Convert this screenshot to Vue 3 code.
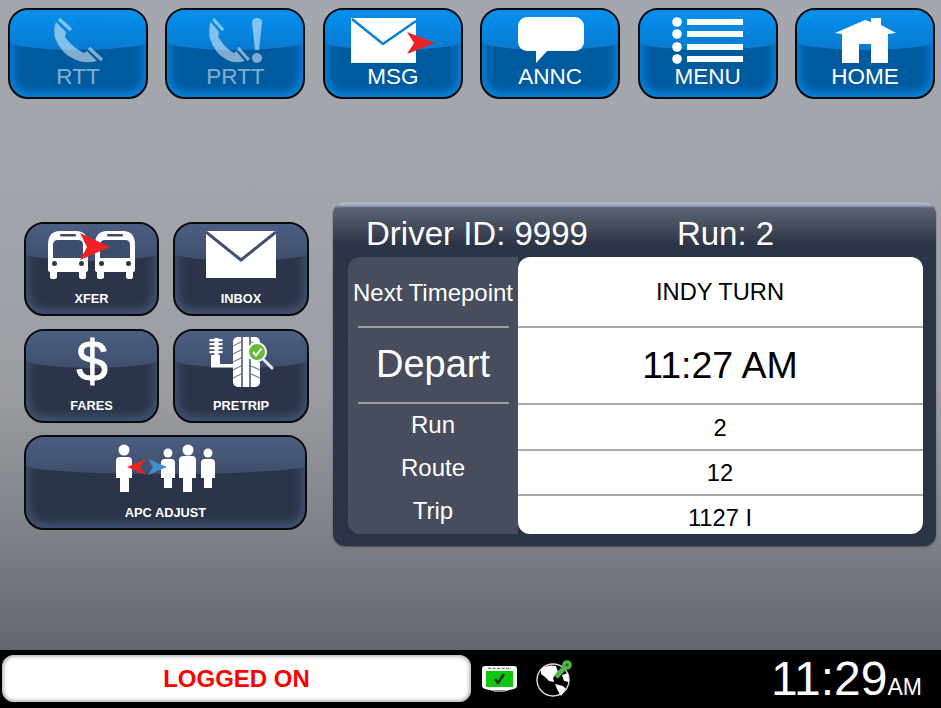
<script setup>
const topLabelClass = (off) => (off ? 'lbl off' : 'lbl')
</script>

<template>
  <div class="screen">
    <div class="main">
      <div class="top-row">
        <button class="btn blue">
          <svg class="ico off" viewBox="10 10 135 56" width="135" height="56">
            <path fill="#fff" d="M55 22 L65 32 L64 37 Q72 48 83 53 L86 51 L96 61 Q85 64 75 60 Q60 54 54 38 Q52 30 55 22 Z" />
            <path d="M58 19 L70 30 M88 48 L101 60" stroke="#fff" stroke-width="3.400" />
          </svg>
          <span :class="topLabelClass(true)">RTT</span>
        </button>
        <button class="btn blue">
          <svg class="ico off" viewBox="167 10 136 56" width="136" height="56">
            <g transform="translate(165 0) scale(.83 1)">
              <path fill="#fff" d="M55 22 L65 32 L64 37 Q72 48 83 53 L86 51 L96 61 Q85 64 75 60 Q60 54 54 38 Q52 30 55 22 Z" />
              <path d="M58 19 L70 30 M88 48 L101 60" stroke="#fff" stroke-width="3.400" />
            </g>
            <path fill="#fff" d="M252 23 Q252 18 257 18 Q262 18 262 23 L259 50 L255 50 Z" />
            <circle cx="257" cy="58" r="5" fill="#fff" />
          </svg>
          <span :class="topLabelClass(true)">PRTT</span>
        </button>
        <button class="btn blue">
          <svg class="ico" viewBox="324 10 136 56" width="136" height="56">
            <rect x="350" y="18" width="65" height="45" fill="#fff" />
            <path d="M351 19 L382 44 L415 21" fill="none" stroke="#0a7fd6" stroke-width="2.600" />
            <path d="M406 32 L434 43 L406 54 L413 43 Z" fill="#ee2224" />
          </svg>
          <span class="lbl">MSG</span>
        </button>
        <button class="btn blue">
          <svg class="ico" viewBox="483 10 135 56" width="135" height="56">
            <rect x="518" y="17" width="66" height="34" rx="9" fill="#fff" />
            <path d="M536 49 L536 63 L549 49 Z" fill="#fff" />
          </svg>
          <span class="lbl">ANNC</span>
        </button>
        <button class="btn blue">
          <svg class="ico" viewBox="640 10 136 56" width="136" height="56">
            <g fill="#fff">
              <circle cx="677" cy="22" r="4.800" />
              <circle cx="677" cy="34" r="4.800" />
              <circle cx="677" cy="47" r="4.800" />
              <circle cx="677" cy="59" r="4.800" />
              <rect x="687" y="19" width="56" height="6" />
              <rect x="687" y="31" width="56" height="6" />
              <rect x="687" y="44" width="56" height="6" />
              <rect x="687" y="56" width="56" height="6" />
            </g>
          </svg>
          <span class="lbl">MENU</span>
        </button>
        <button class="btn blue">
          <svg class="ico" viewBox="798 10 135 56" width="135" height="56">
            <path fill="#fff" d="M836 33 L866 20 L872 22 L872 18 L882 18 L882 25 L897 33 L889 34 L889 63 L872 63 L872 44 L860 44 L860 63 L843 63 L843 34 Z" />
          </svg>
          <span class="lbl">HOME</span>
        </button>
      </div>

      <div class="mid">
        <div class="side">
          <button class="btn dark">
            <svg class="ico" viewBox="26 224 131 56" width="131" height="56">
              <g>
                <path fill="#fff" d="M48 245 Q48 231 60 231 L76 231 Q88 231 88 245 L88 270 Q88 272 86 272 L86 277 Q86 279 83 279 Q79 279 79 277 L79 272 L57 272 L57 277 Q57 279 53 279 Q50 279 50 277 L50 272 Q48 272 48 270 Z" />
                <path fill="#3d4d6c" d="M53 258 L53 245 Q53 240 58 240 L78 240 Q83 240 83 245 L83 258 Z" />
                <rect x="60" y="234" width="16" height="2.400" rx="1" fill="#3d4d6c" />
                <circle cx="54.500" cy="263.500" r="2.500" fill="#2d374c" />
                <circle cx="81.500" cy="263.500" r="2.500" fill="#2d374c" />
              </g>
              <g transform="translate(47 0)">
                <path fill="#fff" d="M48 245 Q48 231 60 231 L76 231 Q88 231 88 245 L88 270 Q88 272 86 272 L86 277 Q86 279 83 279 Q79 279 79 277 L79 272 L57 272 L57 277 Q57 279 53 279 Q50 279 50 277 L50 272 Q48 272 48 270 Z" />
                <path fill="#3d4d6c" d="M53 258 L53 245 Q53 240 58 240 L78 240 Q83 240 83 245 L83 258 Z" />
                <rect x="60" y="234" width="16" height="2.400" rx="1" fill="#3d4d6c" />
                <circle cx="54.500" cy="263.500" r="2.500" fill="#2d374c" />
                <circle cx="81.500" cy="263.500" r="2.500" fill="#2d374c" />
              </g>
              <path d="M80 233 L110 247 L80 260 L87 247 Z" fill="#ee2224" />
            </svg>
            <span class="lbl small">XFER</span>
          </button>
          <button class="btn dark">
            <svg class="ico" viewBox="175 224 132 56" width="132" height="56">
              <rect x="206" y="231" width="70" height="47" fill="#fff" />
              <path d="M206 232 L241 260 L276 232" fill="none" stroke="#3f5070" stroke-width="3" />
            </svg>
            <span class="lbl small">INBOX</span>
          </button>
          <button class="btn dark">
            <svg class="ico visible" viewBox="26 331 131 56" width="131" height="56">
              <text x="92" y="381" text-anchor="middle" class="dollar">$</text>
            </svg>
            <span class="lbl small">FARES</span>
          </button>
          <button class="btn dark">
            <svg class="ico" viewBox="175 331 132 56" width="132" height="56">
              <g fill="#fff">
                <rect x="214.500" y="338" width="4" height="20" />
                <path d="M209.500 339 H222.500 V341.300 H209.500 Z M209.500 343 H222.500 V345.300 H209.500 Z M209.500 347 H222.500 V349.300 H209.500 Z M209.500 351 H222.500 V353.300 H209.500 Z" />
                <path d="M211 355 H220 V364 H233 V367.500 H211 Z" />
                <rect x="233" y="337" width="27" height="50" rx="5" />
              </g>
              <path d="M242 337 V387 M250 337 V387" stroke="#3c4a66" stroke-width="1.500" />
              <path d="M233 346 L241 342 M233 354 L241 350 M233 362 L241 358 M233 370 L241 366 M233 378 L241 374 M251 342 L260 346 M251 358 L260 362 M251 366 L260 370 M251 374 L260 378" stroke="#7d869a" stroke-width="1.300" />
              <path d="M264 360 L272 368" stroke="#e8e8e8" stroke-width="3" stroke-linecap="round" />
              <circle cx="257" cy="352" r="9" fill="#66bb3a" stroke="#fff" stroke-width="2" />
              <path d="M253 352 L256 355.500 L261.500 348.500" fill="none" stroke="#fff" stroke-width="2" />
            </svg>
            <span class="lbl small pretrip">PRE TRIP</span>
          </button>
          <button class="btn dark wide">
            <svg class="ico" viewBox="26 437 279 56" width="279" height="56">
              <g fill="#fff">
                <circle cx="124" cy="450" r="5.500" />
                <path d="M120 457 H128 Q132 457 132 461 V478 H129 V492 H120 V478 H116 V461 Q116 457 120 457 Z" />
                <circle cx="168" cy="453" r="4.500" />
                <path d="M165 459 H171 Q175 459 175 463 V478 H172 V488 H164 V478 H161 V463 Q161 459 165 459 Z" />
                <circle cx="188" cy="450" r="5.500" />
                <path d="M184 456 H192 Q196 456 196 460 V478 H192 V492 H183 V478 H179 V460 Q179 456 184 456 Z" />
                <circle cx="208" cy="453" r="4.500" />
                <path d="M205 459 H211 Q215 459 215 463 V478 H212 V488 H204 V478 H201 V463 Q201 459 205 459 Z" />
              </g>
              <path d="M146 459 L127 467 L146 475 L140 467 Z" fill="#ee2224" />
              <path d="M148 459 L167 467 L148 475 L153 467 Z" fill="#3d8fd0" />
            </svg>
            <span class="lbl small">APC ADJUST</span>
          </button>
        </div>

        <div class="panel">
          <div class="panel-head">
            <span>Driver ID: 9999</span>
            <span>Run: 2</span>
          </div>
          <div class="panel-body">
            <div class="names">
              <div class="name next">Next Timepoint</div>
              <div class="name depart">Depart</div>
              <div class="name plain">Run</div>
              <div class="name plain">Route</div>
              <div class="name plain">Trip</div>
            </div>
            <div class="vals">
              <div class="val r1">INDY TURN</div>
              <div class="val r2">11:27 AM</div>
              <div class="val r3">2</div>
              <div class="val r4">12</div>
              <div class="val r5">1127 I</div>
            </div>
          </div>
        </div>
      </div>
    </div>

    <div class="bar">
      <div class="status">LOGGED ON</div>
      <svg class="mon" viewBox="480 660 40 36" width="40" height="36">
        <path fill="#fff" d="M485 666 H514 Q517 666 517 669 V686 Q517 688 514 689 L505 691 V692 H494 V691 L485 689 Q482 688 482 686 V669 Q482 666 485 666 Z" />
        <rect x="486" y="671" width="27" height="16" fill="#0fc70f" />
        <path d="M488 668.300 H511" stroke="#555" stroke-width="1" stroke-dasharray="3 1.500" />
        <path d="M495 679 L498 683 L504 674" fill="none" stroke="#1c2a1c" stroke-width="2.400" />
        <rect x="494" y="690" width="11" height="2" fill="#888" />
      </svg>
      <svg class="globe" viewBox="534 658 40 40" width="40" height="40">
        <circle cx="553" cy="680" r="16" fill="#000" stroke="#ddd" stroke-width="1.400" />
        <path fill="#fff" d="M541 669 Q548 664 556 666 L558 672 L553 678 L554 682 L549 681 L545 677 L541 674 Z" />
        <path fill="#fff" d="M555 684 L563 686 L566 689 L561 696 L558 691 Z" />
        <path fill="#fff" d="M562 675 L568 673 L569 682 L564 681 Z" />
        <path d="M556 677 L566 666" stroke="#52b24a" stroke-width="5" />
        <circle cx="567" cy="665" r="4.800" fill="#52b24a" />
        <circle cx="567" cy="665" r="1.600" fill="#1f6a1f" />
      </svg>
      <div class="clock">11:29<span class="ampm">AM</span></div>
    </div>
  </div>
</template>

<style scoped>
.screen {
  width: 941px;
  height: 708px;
  overflow: hidden;
  display: flex;
  flex-direction: column;
  font-family: "Liberation Sans", Arial, sans-serif;
}
.main {
  flex: none;
  height: 650px;
  background: linear-gradient(180deg, #a5a7af 0%, #a3a5ad 30%, #9b9da3 60%, #7d8086 83%, #62666e 100%);
}
.top-row {
  display: flex;
  justify-content: space-between;
  padding: 8px 6px 0 8px;
}
.btn {
  position: relative;
  display: flex;
  flex-direction: column;
  align-items: center;
  padding: 0;
  border: 2px solid #0a0a0a;
  border-radius: 20px;
  font-family: inherit;
  color: #fff;
  overflow: hidden;
}
.btn::before {
  content: "";
  position: absolute;
  left: -2px;
  right: -2px;
  top: 0;
  height: 40px;
  border-radius: 0 0 50% 50% / 0 0 9px 9px;
}
.blue {
  width: 140px;
  height: 91px;
  background: #005a9e;
  box-shadow: inset 0 0 14px 1px #0a84de, inset 0 -3px 8px #0a80d8;
}
.blue::before {
  background: linear-gradient(180deg, #0390ee, #0a7ad0);
}
.dark {
  width: 135px;
  height: 94px;
  background: #2b3449;
  box-shadow: inset 0 0 14px 1px #445576, inset 0 -3px 8px #40506f;
}
.dark::before {
  background: linear-gradient(180deg, #4b5e82, #3f4e6c);
  height: 37px;
}
.wide {
  grid-column: span 2;
  width: 283px;
  height: 95px;
}
.wide .lbl.small {
  margin-top: 12px;
}
.ico {
  position: relative;
  display: block;
  flex: none;
}
.ico.off {
  opacity: 0.5;
}
.ico.visible {
  overflow: visible;
}
.lbl {
  position: relative;
  font-size: 22.500px;
  line-height: 24px;
  margin-top: -1px;
}
.lbl.off {
  opacity: 0.5;
}
.lbl.small {
  font-size: 12.800px;
  font-weight: bold;
  line-height: 15px;
  margin-top: 11px;
}
.pretrip {
  word-spacing: -3px;
}
.dollar {
  font-size: 57px;
  fill: #fff;
  stroke: #fff;
  stroke-width: 0.8px;
  font-family: "Liberation Sans", Arial, sans-serif;
}
.mid {
  display: flex;
  align-items: flex-start;
  padding: 103px 0 0 24px;
}
.side {
  display: grid;
  grid-template-columns: 135px 136px;
  grid-template-rows: 94px 94px 95px;
  column-gap: 14px;
  row-gap: 12.500px;
  margin-top: 20px;
}
.side > :nth-child(2),
.side > :nth-child(4) {
  width: 136px;
}
.panel {
  width: 603px;
  height: 344px;
  margin-left: 24px;
  border-radius: 12px;
  background: linear-gradient(180deg, #b3bace 0, #aab1c4 3px, #5d6372 6px, #2c3547 42px, #2b3446 100%);
  box-shadow: 0 1px 2px rgba(0, 0, 0, 0.4);
  display: flex;
  flex-direction: column;
}
.panel-head {
  height: 55px;
  display: flex;
  gap: 89px;
  padding: 13px 0 0 33px;
  box-sizing: border-box;
  color: #fff;
  font-size: 33px;
  line-height: 38px;
}
.panel-body {
  display: flex;
  width: 575px;
  height: 277px;
  margin-left: 15px;
}
.names {
  width: 170px;
  background: #474d5c;
  border-radius: 12px 0 0 12px;
  color: #fff;
  text-align: center;
  display: flex;
  flex-direction: column;
}
.name {
  position: relative;
  font-size: 24px;
  display: flex;
  align-items: center;
  justify-content: center;
  box-sizing: border-box;
}
.next {
  height: 71px;
  padding-top: 1px;
}
.depart {
  height: 76px;
  font-size: 38px;
  padding-bottom: 3px;
}
.next::after,
.depart::after {
  content: "";
  position: absolute;
  left: 10px;
  right: 9px;
  bottom: 0;
  height: 2px;
  background: #9b9ea5;
}
.plain {
  height: 43px;
  padding-bottom: 2px;
}
.vals {
  flex: 1;
  background: #fff;
  border-radius: 12px;
  color: #000;
  display: flex;
  flex-direction: column;
  text-align: center;
  font-size: 23.700px;
  overflow: hidden;
}
.val {
  display: flex;
  align-items: center;
  justify-content: center;
  box-sizing: border-box;
  border-bottom: 2px solid #a9abb1;
  padding-right: 1px;
}
.r1 { height: 71px; padding-top: 1px; }
.r2 { height: 77px; font-size: 37.500px; }
.r3 { height: 46px; padding-top: 2px; }
.r4 { height: 45px; padding-top: 2px; }
.r5 { flex: 1; border-bottom: 0; padding-top: 7px; }
.bar {
  flex: none;
  height: 58px;
  overflow: hidden;
  background: #000;
  display: flex;
  align-items: flex-start;
  padding: 5px 19px 0 2px;
  box-sizing: border-box;
}
.status {
  width: 469px;
  height: 47px;
  flex: none;
  border-radius: 12px;
  background: #fff;
  box-shadow: inset 0 0 4px 1px #9a9a9a;
  color: #f00;
  font-size: 24px;
  font-weight: bold;
  display: flex;
  align-items: center;
  justify-content: center;
}
.mon {
  flex: none;
  margin: 5px 0 0 9px;
}
.globe {
  flex: none;
  margin: 3px 0 0 14px;
}
.clock {
  margin-left: auto;
  color: #fff;
  font-size: 48px;
  line-height: 48px;
  white-space: nowrap;
}
.ampm {
  font-size: 23px;
}
</style>
